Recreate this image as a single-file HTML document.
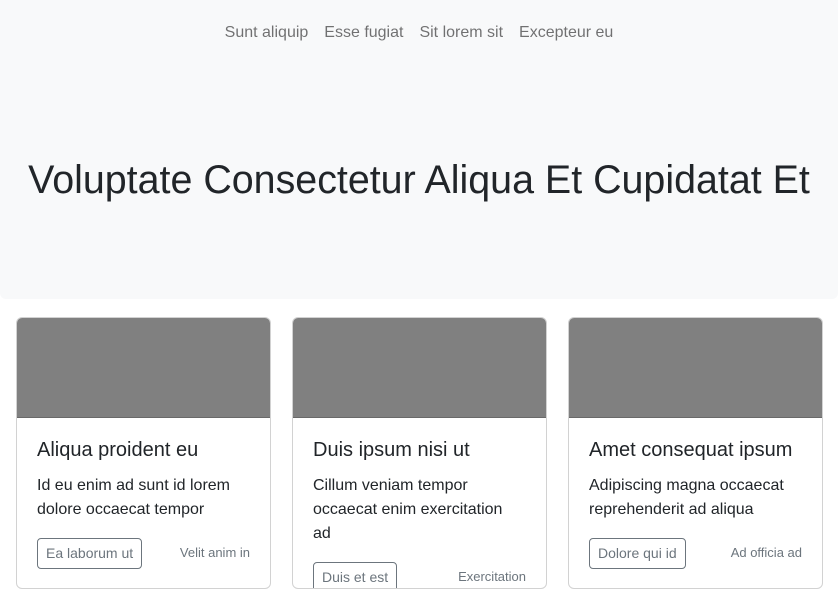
<!DOCTYPE html>
<html><head><style>
*{box-sizing:border-box;margin:0;padding:0}
body{width:838px;height:589px;overflow:hidden;background:#fff;font-family:"Liberation Sans",Arial,sans-serif;color:#212529;position:relative}
.hdr{position:absolute;left:0;top:0;width:838px;height:299px;background:#f8f9fa;border-radius:0 0 6px 6px}
.nav{position:absolute;top:21px;left:0;width:838px;text-align:center;font-size:16px;line-height:24px;color:rgba(0,0,0,.55)}
.nav span{margin:0 8px}
h1{position:absolute;top:156px;left:0;width:838px;text-align:center;font-size:39.4px;font-weight:400;line-height:48px}
.card{position:absolute;top:317px;width:255px;height:272px;border:1px solid rgba(0,0,0,.175);border-radius:6px;overflow:hidden}
.img{height:100px;background:#808080;border-bottom:1px solid rgba(0,0,0,.175)}
.t{position:absolute;left:20px;top:120px;font-size:20px;line-height:24px;font-weight:500}
.p{position:absolute;left:20px;top:156px;width:205px;font-size:16px;line-height:24px}
.b{position:absolute;left:20px;height:31px;border:1px solid #6c757d;border-radius:4px;padding:0 8px;font-size:14px;line-height:29px;color:#6c757d}
.s{position:absolute;right:20px;font-size:13px;color:#6c757d;line-height:20px}
</style></head><body>
<div class="hdr"></div>
<div class="nav"><span>Sunt aliquip</span><span>Esse fugiat</span><span>Sit lorem sit</span><span>Excepteur eu</span></div>
<h1>Voluptate Consectetur Aliqua Et Cupidatat Et</h1>
<div class="card" style="left:16px"><div class="img"></div><div class="t">Aliqua proident eu</div><div class="p">Id eu enim ad sunt id lorem dolore occaecat tempor</div><div class="b" style="top:220px">Ea laborum ut</div><div class="s" style="top:225px">Velit anim in</div></div>
<div class="card" style="left:292px"><div class="img"></div><div class="t">Duis ipsum nisi ut</div><div class="p">Cillum veniam tempor occaecat enim exercitation ad</div><div class="b" style="top:244px">Duis et est</div><div class="s" style="top:249px">Exercitation</div></div>
<div class="card" style="left:568px"><div class="img"></div><div class="t">Amet consequat ipsum</div><div class="p">Adipiscing magna occaecat reprehenderit ad aliqua</div><div class="b" style="top:220px">Dolore qui id</div><div class="s" style="top:225px">Ad officia ad</div></div>
</body></html>
